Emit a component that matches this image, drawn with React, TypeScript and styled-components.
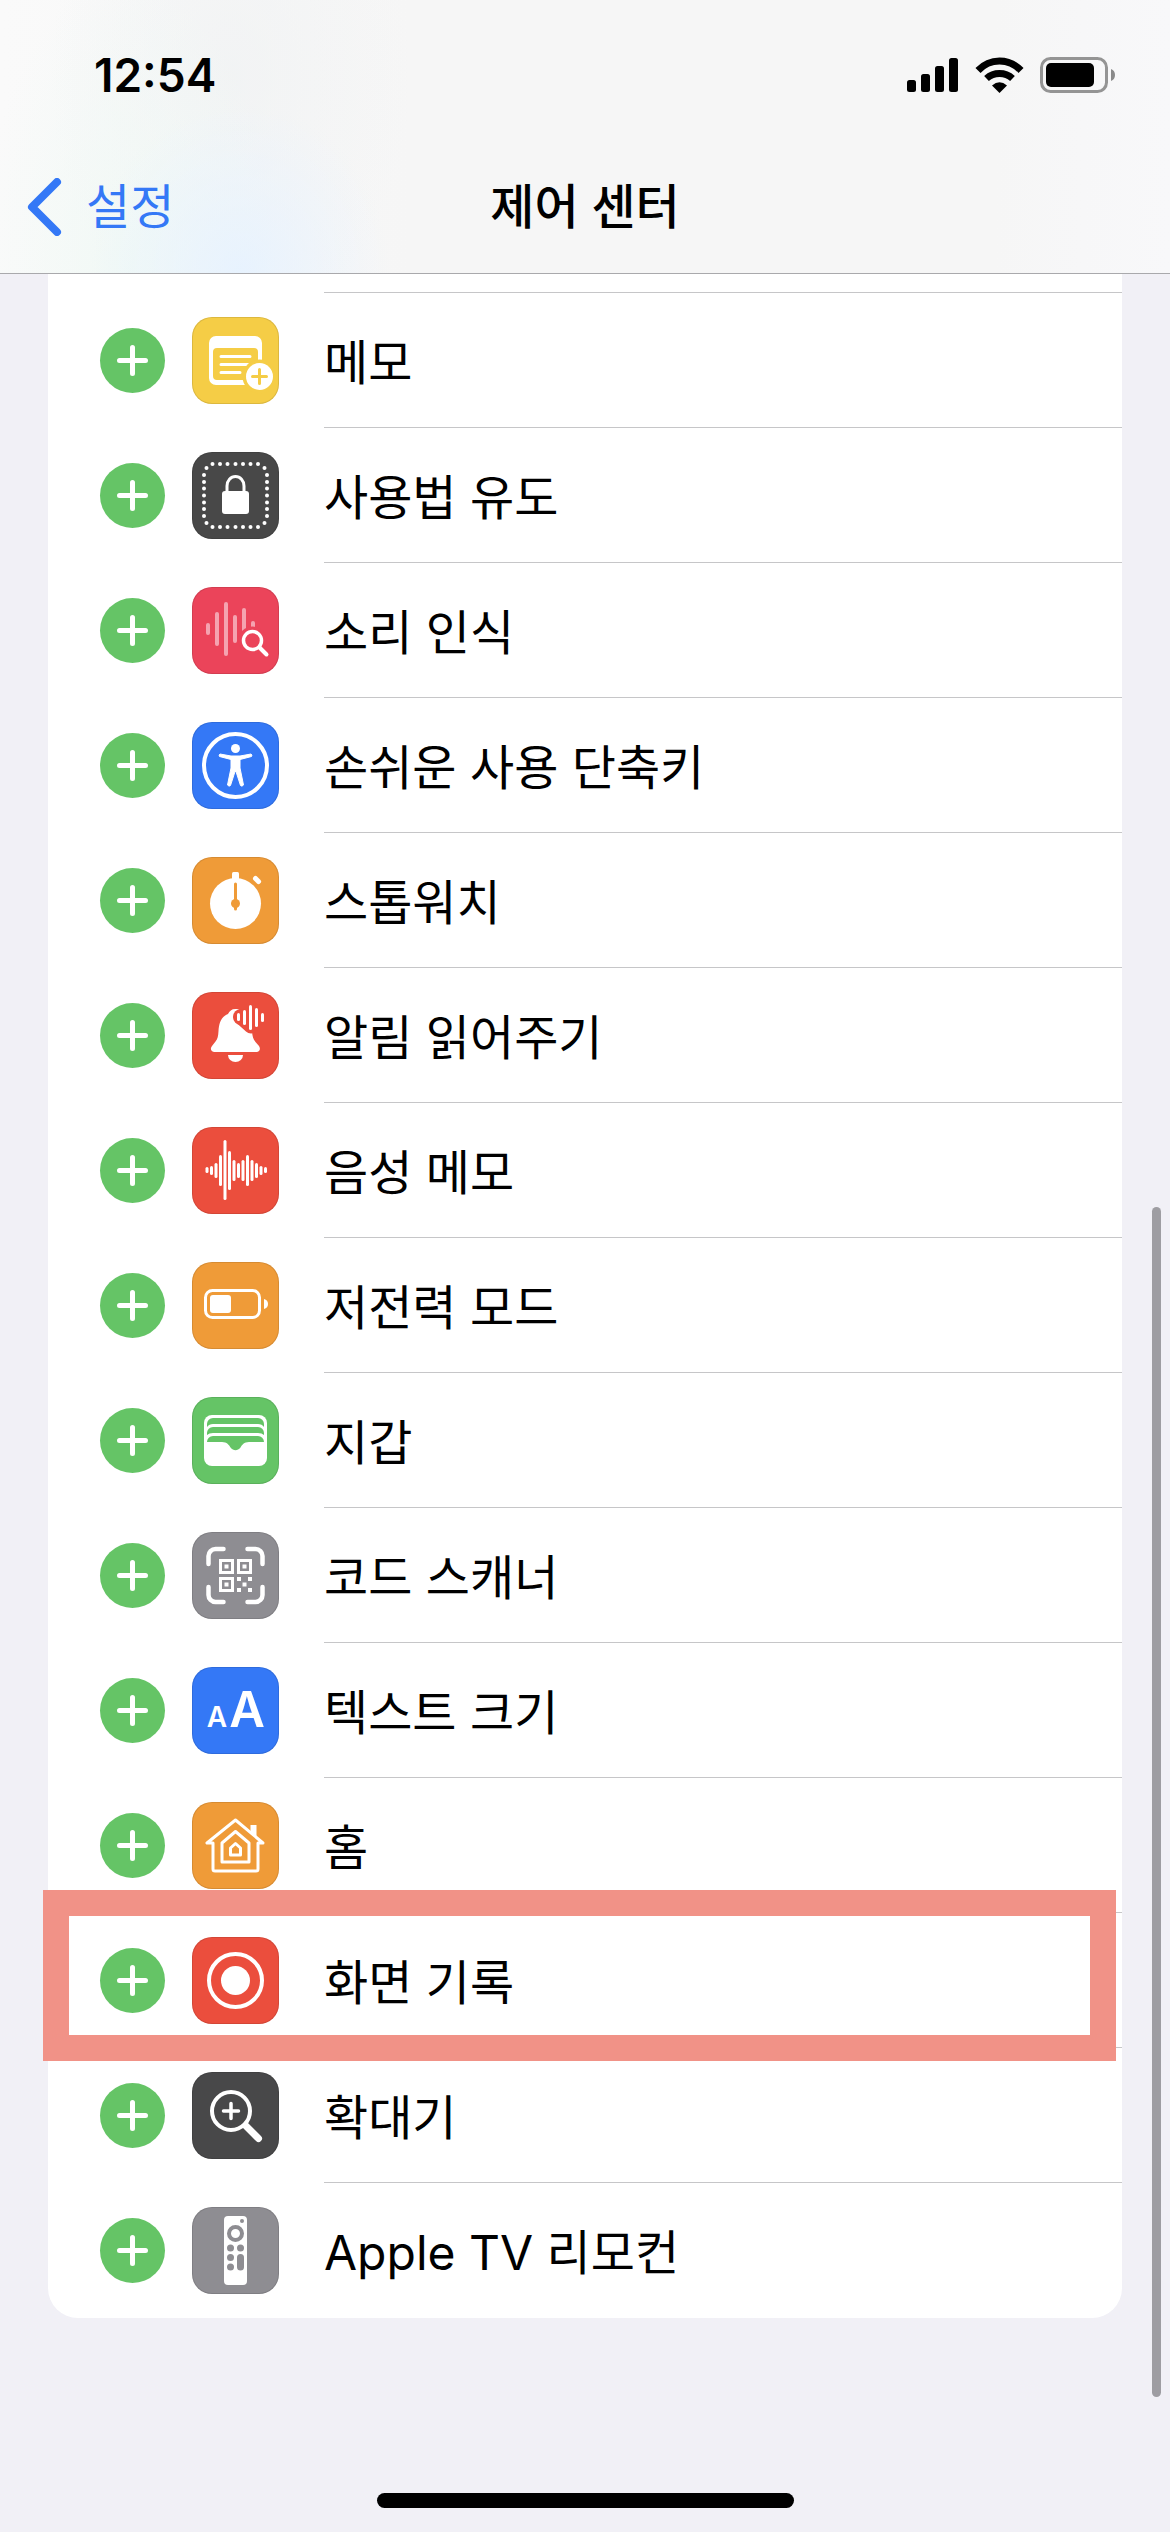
import React from "react";
import styled, { createGlobalStyle } from "styled-components";

const GlobalStyle = createGlobalStyle`
  *, *::before, *::after { box-sizing: border-box; }
  html, body, #root { min-height: 100vh; }
  body {
    margin: 0;
    background: #f1f0f6;
    color: #000;
    font-family: Inter, "Noto Sans CJK KR", sans-serif;
  }
`;

const Screen = styled.div`
  position: relative;
  display: flex;
  flex-direction: column;
  min-height: 100vh;
  overflow: hidden;
`;

const Header = styled.header`
  border-bottom: 1px solid #a9a9ac;
  background:
    radial-gradient(ellipse 150px 170px at 240px 100%, rgba(230, 242, 255, 0.9), rgba(230, 242, 255, 0)),
    radial-gradient(ellipse 150px 300px at 130px 100%, rgba(240, 249, 245, 0.9), rgba(240, 249, 245, 0)),
    radial-gradient(ellipse 180px 260px at 230px 80px, rgba(240, 242, 243, 0.8), rgba(240, 242, 243, 0)),
    linear-gradient(90deg, #fafafa 0, #f6f6f6 35%, #f6f6f6 85%, #f8f8fa 100%);
`;

const StatusBar = styled.div`
  display: flex;
  align-items: center;
  justify-content: space-between;
  height: 141px;
  padding: 8px 54px 0 94px;
`;

const Clock = styled.time`
  font-size: 46px;
  font-weight: 600;
  line-height: 54px;
`;

const StatusIcons = styled.div`
  display: flex;
  align-items: center;
  gap: 16px;
`;

const NavBar = styled.nav`
  display: grid;
  grid-template-columns: 1fr auto 1fr;
  align-items: center;
  height: 132px;
  padding: 0 27px;
`;

const BackLink = styled.a`
  display: flex;
  align-items: center;
  gap: 24px;
  color: #3478f6;
  font-size: 48px;
  line-height: 60px;
  text-decoration: none;
`;

const Title = styled.h1`
  margin: 0;
  font-size: 48px;
  font-weight: 500;
  line-height: 60px;
`;

const List = styled.ul`
  margin: 0 48px;
  padding: 0;
  list-style: none;
  background: #fff;
  border-radius: 0 0 30px 30px;
`;

const Row = styled.li`
  position: relative;
  display: flex;
  align-items: stretch;
  padding-left: 52px;
`;

const Sliver = styled.li`
  height: 19px;
  margin-left: 276px;
  border-bottom: 1px solid #c6c6c8;
`;

const Controls = styled.div`
  display: flex;
  flex: none;
  align-items: center;
  gap: 27px;
  width: 224px;
`;

const AddButton = styled.button`
  display: block;
  width: 65px;
  height: 65px;
  padding: 0;
  border: 0;
  border-radius: 50%;
  background: #65c466;
`;

const Tile = styled.span<{ $color: string }>`
  display: block;
  width: 87px;
  height: 87px;
  border-radius: 20px;
  background: ${(p) => p.$color};
  box-shadow: inset 0 0 0 1px rgba(0, 0, 0, 0.1);
`;

const Label = styled.span<{ $last: boolean }>`
  flex: 1;
  height: 135px;
  padding-top: 4px;
  border-bottom: ${(p) => (p.$last ? "0" : "1px solid #c6c6c8")};
  font-size: 48px;
  line-height: 132px;
`;

const Highlight = styled.span`
  position: absolute;
  inset: -23px 6px -13px -5px;
  border: 26px solid #f19287;
  pointer-events: none;
`;

const ScrollThumb = styled.div`
  position: absolute;
  top: 1207px;
  right: 9px;
  width: 9px;
  height: 1190px;
  border-radius: 5px;
  background: #9e9da2;
`;

const HomeIndicator = styled.div`
  width: 417px;
  height: 15px;
  margin: auto auto 24px;
  border-radius: 8px;
  background: #000;
`;

const Glyph = ({ children }: { children: React.ReactNode }) => (
  <svg width="87" height="87" viewBox="0 0 87 87" fill="none" aria-hidden="true">
    {children}
  </svg>
);

const bars = (list: number[][], width: number, stroke: string) =>
  list.map(([x, y1, y2]) => (
    <path key={x} d={`M${x} ${y1 + width / 2}V${y2 - width / 2}`} stroke={stroke} strokeWidth={width} strokeLinecap="round" />
  ));

const NotesIcon = () => (
  <Glyph>
    <path
      fillRule="evenodd"
      fill="#fff"
      d="M24 19h39a7 7 0 0 1 7 7v35a7 7 0 0 1-7 7H24a7 7 0 0 1-7-7V26a7 7 0 0 1 7-7ZM25 31a4 4 0 0 0-4 4v24a4 4 0 0 0 4 4h37a4 4 0 0 0 4-4V35a4 4 0 0 0-4-4Z"
    />
    <path d="M29 39.5H58M29 47.500H56M29 55.5H48" stroke="#fff" strokeWidth="3" strokeLinecap="round" />
    <circle cx="67.5" cy="59.5" r="17" fill="#f5cd46" />
    <circle cx="67.5" cy="59.5" r="13.5" fill="#fff" />
    <path d="M60.5 59.5h14M67.5 52.5v14" stroke="#f5cd46" strokeWidth="3" strokeLinecap="round" />
  </Glyph>
);

const dots: number[][] = [
  ...[20.5, 28, 35.5, 43.5, 51, 58.5, 66].flatMap((x) => [[x, 12], [x, 75]]),
  ...[23, 30, 36.5, 43.5, 50.5, 57, 64].flatMap((y) => [[12, y], [75, y]]),
  [14.5, 16], [72.5, 16], [14.5, 71], [72.5, 71],
];

const GuidedAccessIcon = () => (
  <Glyph>
    {dots.map(([x, y]) => (
      <circle key={`${x}-${y}`} cx={x} cy={y} r="2" fill="#fff" />
    ))}
    <rect x="30" y="39" width="27" height="23" rx="3" fill="#fff" />
    <path d="M35 40V34a8.5 9.5 0 0 1 17 0V40" stroke="#fff" strokeWidth="3" />
  </Glyph>
);

const SoundIcon = () => (
  <Glyph>
    {bars([[16, 36, 48], [25, 25, 59], [34, 15, 69], [43, 28, 56], [52, 21, 46], [61, 34, 42]], 4, "#f5a3b0")}
    <circle cx="60.5" cy="53.5" r="14" fill="#eb445a" />
    <circle cx="60.5" cy="53.5" r="9" stroke="#fff" strokeWidth="3.5" />
    <path d="M67.5 60.5L74.5 67.5" stroke="#fff" strokeWidth="4" strokeLinecap="round" />
  </Glyph>
);

const AccessibilityIcon = () => (
  <Glyph>
    <circle cx="43.5" cy="43.5" r="31.5" stroke="#fff" strokeWidth="4" />
    <circle cx="43.5" cy="26.5" r="4.5" fill="#fff" />
    <path
      fill="#fff"
      stroke="#fff"
      strokeLinejoin="round"
      d="M28 32l11 2h9l11-2q1.500 1 .5 2.500L48 37.500V46l3.500 17q-1.500 2-3 .5L44 49.500h-1L38.500 63.500q-1.500 1.500-3-.5L39 46V37.500L27.500 34.500q-1-1.500.5-2.500Z"
    />
  </Glyph>
);

const StopwatchIcon = () => (
  <Glyph>
    <circle cx="43.5" cy="46.5" r="25.5" fill="#fff" />
    <rect x="40" y="15" width="7" height="10" rx="1.5" fill="#fff" />
    <path d="M63.5 21.5L66.5 24.5" stroke="#fff" strokeWidth="5" strokeLinecap="round" />
    <path d="M43.5 27V52" stroke="#ef9b38" strokeWidth="3" strokeLinecap="round" />
    <circle cx="43.5" cy="46.5" r="4.5" fill="#ef9b38" />
  </Glyph>
);

const AnnounceIcon = () => (
  <Glyph>
    <path
      fill="#fff"
      d="M43.5 17c-4 0-6 2-7.5 5-7 3-9 9-9.500 17-.3 5-.8 8-3 10.500L20 54c-2.500 3-.5 6 2.500 6h42c3 0 4.500-3 2.500-6l-3.500-4C61 47 60.500 44 60 40c-1-5-7-18-13.500-23Z"
    />
    <circle cx="49" cy="25" r="8" fill="#eb4e3d" />
    <path d="M49 25L59 34" stroke="#eb4e3d" strokeWidth="15" strokeLinecap="round" />
    {bars([[46.5, 21, 29], [52.5, 18, 33], [58.5, 13, 38], [64.5, 16, 35], [70.5, 21, 30]], 3, "#fff")}
    <path fill="#fff" d="M36 63h15a7.500 7 0 0 1-15 0Z" />
  </Glyph>
);

const VoiceMemoIcon = () => (
  <Glyph>
    {bars(
      [
        [15, 40, 46], [19.5, 39, 48], [24, 36, 51], [28.5, 28, 59], [33, 13, 73], [37.5, 24, 63], [42, 33, 54],
        [46.5, 36, 51], [51, 33, 54], [55.5, 28, 59], [60, 33, 54], [64.5, 36, 51], [69, 39, 48], [73.5, 40, 46],
      ],
      3,
      "#fff",
    )}
  </Glyph>
);

const LowPowerIcon = () => (
  <Glyph>
    <rect x="13.5" y="28.5" width="54" height="27" rx="7" stroke="#fff" strokeWidth="3" />
    <rect x="18" y="33" width="21" height="18" rx="3" fill="#fff" />
    <path fill="#fff" d="M72 37q4 1 4 5t-4 5Z" />
  </Glyph>
);

const WalletIcon = () => (
  <Glyph>
    <rect x="12" y="18" width="63" height="51" rx="8" fill="#fff" />
    <path
      fill="#65c466"
      d="M15 30v-3a6 6 0 0 1 6-6H66a6 6 0 0 1 6 6v3q-2-3-6-3H21q-4 0-6 3ZM15 38v-2a6 6 0 0 1 6-6H66a6 6 0 0 1 6 6v2q-2-2-6-2H21q-4 0-6 2ZM15 45a6 6 0 0 1 6-6H66a6 6 0 0 1 6 6H57c-5 0-7 3-8.500 5.500-3 3.500-7 3.500-10 0C37 48 35 45 30 45Z"
    />
  </Glyph>
);

const ScannerIcon = () => (
  <Glyph>
    <path
      d="M16.500 32V24a7 7 0 0 1 7-7H31.500M55.500 17H63.500a7 7 0 0 1 7 7V32M70.500 55V63a7 7 0 0 1-7 7H55.500M31.500 70H23.500a7 7 0 0 1-7-7V55"
      stroke="#fff"
      strokeWidth="4.5"
      strokeLinecap="round"
    />
    {[[28, 28], [46, 28], [28, 46]].map(([x, y]) => (
      <g key={`${x}-${y}`}>
        <rect x={x + 0.5} y={y + 0.5} width="12" height="12" stroke="#fff" strokeWidth="3" />
        <rect x={x + 4.5} y={y + 4.5} width="4" height="4" fill="#fff" />
      </g>
    ))}
    {[[45, 45], [56, 45], [50.5, 50.5], [45, 56], [56, 56]].map(([x, y]) => (
      <rect key={`${x}-${y}`} x={x} y={y} width="4" height="4" fill="#fff" />
    ))}
  </Glyph>
);

const Letters = styled.text`
  font-family: Inter, sans-serif;
  font-weight: 600;
  fill: #fff;
`;

const TextSizeIcon = () => (
  <Glyph>
    <Letters x="25" y="60" fontSize="28" textAnchor="middle">A</Letters>
    <Letters x="55" y="60" fontSize="49" textAnchor="middle">A</Letters>
  </Glyph>
);

const HomeIcon = () => (
  <Glyph>
    <g stroke="#fff" strokeWidth="3" strokeLinejoin="round">
      <path d="M21 41v26a2 2 0 0 0 2 2H64a2 2 0 0 0 2-2V41h5L43.500 18 15 41Z" />
      <path d="M30 60V41L43.500 29.500 57 41V60Z" />
      <path d="M38.500 53V46L43.500 41.500 48.500 46V53Z" />
    </g>
    <path fill="#fff" d="M58.500 23h6V35l-6-5Z" />
  </Glyph>
);

const RecordIcon = () => (
  <Glyph>
    <circle cx="43.5" cy="43.5" r="26.5" stroke="#fff" strokeWidth="4" />
    <circle cx="43.5" cy="43.5" r="14.5" fill="#fff" />
  </Glyph>
);

const MagnifierIcon = () => (
  <Glyph>
    <circle cx="39" cy="39" r="19" stroke="#fff" strokeWidth="4" />
    <path d="M31.500 39h15M39 31.500v15" stroke="#fff" strokeWidth="3.5" strokeLinecap="round" />
    <path d="M54 54L66.500 66.500" stroke="#fff" strokeWidth="7" strokeLinecap="round" />
  </Glyph>
);

const RemoteIcon = () => (
  <Glyph>
    <rect x="32" y="9" width="23" height="69" rx="4" fill="#fff" />
    <circle cx="43.5" cy="26.5" r="6.5" stroke="#8e8d92" strokeWidth="4" />
    <circle cx="50" cy="14" r="2" fill="#8e8d92" />
    {[[38.5, 41], [48.5, 41], [38.5, 50.5], [38.5, 60]].map(([x, y]) => (
      <circle key={`${x}-${y}`} cx={x} cy={y} r="3.5" fill="#8e8d92" />
    ))}
    <rect x="45" y="47" width="7" height="16.5" rx="3.5" fill="#8e8d92" />
  </Glyph>
);

type Item = { name: string; color: string; Icon: React.FC; highlighted?: boolean };

const items: Item[] = [
  { name: "메모", color: "#f5cd46", Icon: NotesIcon },
  { name: "사용법 유도", color: "#484848", Icon: GuidedAccessIcon },
  { name: "소리 인식", color: "#eb445a", Icon: SoundIcon },
  { name: "손쉬운 사용 단축키", color: "#3478f6", Icon: AccessibilityIcon },
  { name: "스톱워치", color: "#ef9b38", Icon: StopwatchIcon },
  { name: "알림 읽어주기", color: "#eb4e3d", Icon: AnnounceIcon },
  { name: "음성 메모", color: "#eb4e3d", Icon: VoiceMemoIcon },
  { name: "저전력 모드", color: "#ef9b38", Icon: LowPowerIcon },
  { name: "지갑", color: "#65c466", Icon: WalletIcon },
  { name: "코드 스캐너", color: "#8e8d92", Icon: ScannerIcon },
  { name: "텍스트 크기", color: "#3478f6", Icon: TextSizeIcon },
  { name: "홈", color: "#ef9b38", Icon: HomeIcon },
  { name: "화면 기록", color: "#eb4e3d", Icon: RecordIcon, highlighted: true },
  { name: "확대기", color: "#484849", Icon: MagnifierIcon },
  { name: "Apple TV 리모컨", color: "#8e8d92", Icon: RemoteIcon },
];

const SignalIcon = () => (
  <svg width="52" height="36" viewBox="0 0 52 36" aria-hidden="true">
    <rect x="0" y="23" width="9" height="12" rx="2.5" />
    <rect x="14" y="17" width="9" height="18" rx="2.5" />
    <rect x="28" y="9" width="9" height="26" rx="2.5" />
    <rect x="42" y="1" width="9" height="34" rx="2.5" />
  </svg>
);

const WifiIcon = () => (
  <svg width="49" height="36" viewBox="0 0 49 36" fill="none" aria-hidden="true">
    <path d="M3 13.500Q12 4 24.500 4T46 13.500" stroke="#000" strokeWidth="7" />
    <path d="M11.500 21.500Q17 16.500 24.500 16.500T37.500 21.500" stroke="#000" strokeWidth="7" />
    <path d="M17 28.500q7.500-6.500 15 0L24.500 36Z" fill="#000" />
  </svg>
);

const BatteryIcon = () => (
  <svg width="76" height="36" viewBox="0 0 76 36" fill="none" aria-hidden="true">
    <rect x="1.5" y="1.5" width="65" height="33" rx="9" stroke="#949494" strokeWidth="3" />
    <rect x="6" y="6" width="48" height="24" rx="5" fill="#000" />
    <path d="M71 12q4 1.500 4 6t-4 6Z" fill="#8a8a8a" />
  </svg>
);

export default function App() {
  return (
    <Screen lang="ko">
      <GlobalStyle />
      <Header>
        <StatusBar>
          <Clock>12:54</Clock>
          <StatusIcons>
            <SignalIcon />
            <WifiIcon />
            <BatteryIcon />
          </StatusIcons>
        </StatusBar>
        <NavBar>
          <BackLink href="#settings">
            <svg width="35" height="58" viewBox="0 0 35 58" fill="none" aria-hidden="true">
              <path d="M30 4L5 29 30 54" stroke="#3478f6" strokeWidth="8" strokeLinecap="round" strokeLinejoin="round" />
            </svg>
            설정
          </BackLink>
          <Title>제어 센터</Title>
        </NavBar>
      </Header>
      <List>
        <Sliver aria-hidden="true" />
        {items.map(({ name, color, Icon, highlighted }, index) => (
          <Row key={name}>
            <Controls>
              <AddButton type="button" aria-label={`${name} 추가`}>
                <svg width="65" height="65" viewBox="0 0 65 65" aria-hidden="true">
                  <path d="M19.500 32.500h26M32.500 19.500v26" stroke="#fff" strokeWidth="5" strokeLinecap="round" />
                </svg>
              </AddButton>
              <Tile $color={color}>
                <Icon />
              </Tile>
            </Controls>
            <Label $last={index === items.length - 1}>{name}</Label>
            {highlighted && <Highlight />}
          </Row>
        ))}
      </List>
      <ScrollThumb />
      <HomeIndicator />
    </Screen>
  );
}
